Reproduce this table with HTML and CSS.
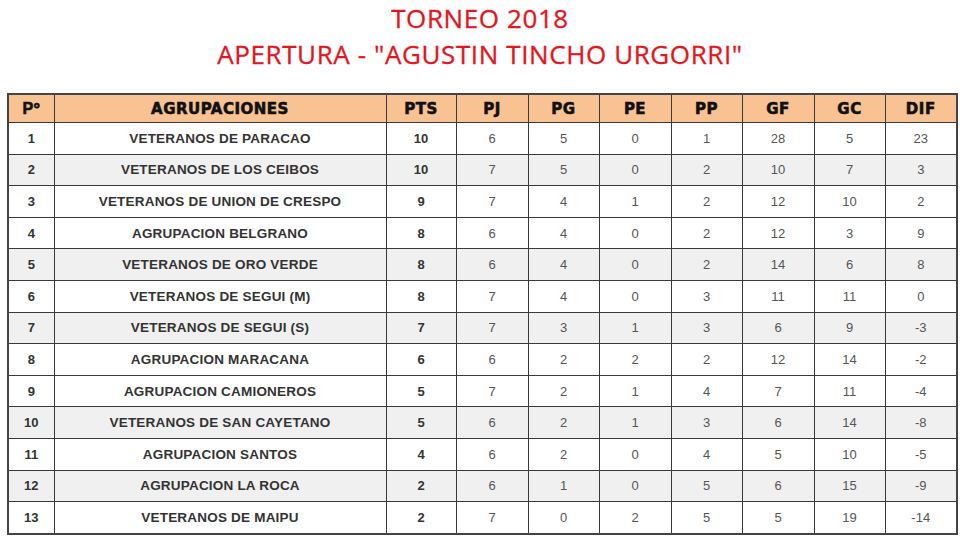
FILE: index.html
```html
<!DOCTYPE html>
<html lang="es">
<head>
<meta charset="utf-8">
<title>Torneo 2018</title>
<link rel="stylesheet" href="styles.css">
</head>
<body>
<div class="page">
  <header class="titles">
    <div class="title-line">TORNEO 2018</div>
    <div class="title-line">APERTURA - "AGUSTIN TINCHO URGORRI"</div>
  </header>
  <table class="standings">
    <colgroup>
      <col class="c-pos"><col class="c-name"><col class="c-pts"><col class="c-n2"><col class="c-n1"><col class="c-n2"><col class="c-n1"><col class="c-n2"><col class="c-n1"><col class="c-n2">
    </colgroup>
    <thead>
      <tr><th class="h-pos">Pº</th><th>AGRUPACIONES</th><th>PTS</th><th>PJ</th><th>PG</th><th>PE</th><th>PP</th><th>GF</th><th>GC</th><th>DIF</th></tr>
    </thead>
    <tbody>
      <tr><td class="pos">1</td><td class="name">VETERANOS DE PARACAO</td><td class="pts">10</td><td>6</td><td>5</td><td>0</td><td>1</td><td>28</td><td>5</td><td>23</td></tr>
      <tr class="alt"><td class="pos">2</td><td class="name">VETERANOS DE LOS CEIBOS</td><td class="pts">10</td><td>7</td><td>5</td><td>0</td><td>2</td><td>10</td><td>7</td><td>3</td></tr>
      <tr><td class="pos">3</td><td class="name">VETERANOS DE UNION DE CRESPO</td><td class="pts">9</td><td>7</td><td>4</td><td>1</td><td>2</td><td>12</td><td>10</td><td>2</td></tr>
      <tr><td class="pos">4</td><td class="name">AGRUPACION BELGRANO</td><td class="pts">8</td><td>6</td><td>4</td><td>0</td><td>2</td><td>12</td><td>3</td><td>9</td></tr>
      <tr class="alt"><td class="pos">5</td><td class="name">VETERANOS DE ORO VERDE</td><td class="pts">8</td><td>6</td><td>4</td><td>0</td><td>2</td><td>14</td><td>6</td><td>8</td></tr>
      <tr><td class="pos">6</td><td class="name">VETERANOS DE SEGUI (M)</td><td class="pts">8</td><td>7</td><td>4</td><td>0</td><td>3</td><td>11</td><td>11</td><td>0</td></tr>
      <tr class="alt"><td class="pos">7</td><td class="name">VETERANOS DE SEGUI (S)</td><td class="pts">7</td><td>7</td><td>3</td><td>1</td><td>3</td><td>6</td><td>9</td><td>-3</td></tr>
      <tr><td class="pos">8</td><td class="name">AGRUPACION MARACANA</td><td class="pts">6</td><td>6</td><td>2</td><td>2</td><td>2</td><td>12</td><td>14</td><td>-2</td></tr>
      <tr><td class="pos">9</td><td class="name">AGRUPACION CAMIONEROS</td><td class="pts">5</td><td>7</td><td>2</td><td>1</td><td>4</td><td>7</td><td>11</td><td>-4</td></tr>
      <tr class="alt"><td class="pos">10</td><td class="name">VETERANOS DE SAN CAYETANO</td><td class="pts">5</td><td>6</td><td>2</td><td>1</td><td>3</td><td>6</td><td>14</td><td>-8</td></tr>
      <tr><td class="pos">11</td><td class="name">AGRUPACION SANTOS</td><td class="pts">4</td><td>6</td><td>2</td><td>0</td><td>4</td><td>5</td><td>10</td><td>-5</td></tr>
      <tr class="alt"><td class="pos">12</td><td class="name">AGRUPACION LA ROCA</td><td class="pts">2</td><td>6</td><td>1</td><td>0</td><td>5</td><td>6</td><td>15</td><td>-9</td></tr>
      <tr><td class="pos">13</td><td class="name">VETERANOS DE MAIPU</td><td class="pts">2</td><td>7</td><td>0</td><td>2</td><td>5</td><td>5</td><td>19</td><td>-14</td></tr>
    </tbody>
  </table>
</div>
</body>
</html>
```
FILE: styles.css
```css
html, body {
  margin: 0;
  padding: 0;
  background: #ffffff;
}
.page {
  width: 960px;
  height: 540px;
  overflow: hidden;
}
.titles {
  height: 72px;
  margin-bottom: 21px;
  text-align: center;
  color: #e5141d;
  font-family: "Open Sans", "Liberation Sans", sans-serif;
  font-size: 26px;
  letter-spacing: 0.6px;
  line-height: 36px;
  -webkit-text-stroke: 0.3px #e5141d;
}
.standings {
  margin-left: 7px;
  width: 948px;
  border-collapse: collapse;
  table-layout: fixed;
  font-family: "Liberation Sans", Arial, sans-serif;
  border: 2px solid #444;
}
.c-pos { width: 46px; }
.c-name { width: 332px; }
.c-pts { width: 70px; }
.c-n1 { width: 71px; }
.c-n2 { width: 72px; }
.standings th,
.standings td {
  border: 1.5px solid #3a3a3a;
  text-align: center;
  padding: 0;
}
.standings th {
  height: 27px;
  background: #f8c292;
  color: #111;
  font-family: "DejaVu Sans", "Liberation Sans", sans-serif;
  font-weight: bold;
  font-size: 15px;
  -webkit-text-stroke: 0.6px #111;
  letter-spacing: 0.5px;
}
.standings th.h-pos {
  font-family: "Liberation Sans", Arial, sans-serif;
  font-size: 16px;
}
.standings td {
  height: 30.6px;
  color: #555;
  font-size: 13px;
}
.standings tr.alt td {
  background: #f0f0f0;
}
.standings td.pos,
.standings td.name,
.standings td.pts {
  color: #333;
  font-weight: bold;
}
.standings td.name {
  font-size: 13.5px;
  letter-spacing: 0.2px;
}
```
